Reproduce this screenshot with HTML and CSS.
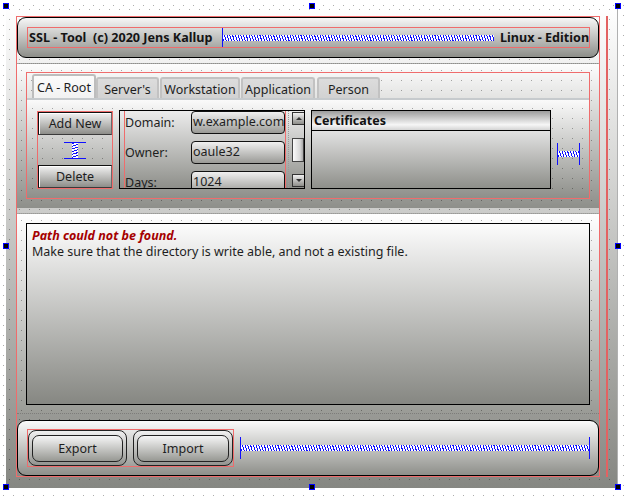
FILE: index.html
```html
<!DOCTYPE html>
<html>
<head>
<meta charset="utf-8">
<title>SSL - Tool</title>
<link rel="stylesheet" href="styles.css">
</head>
<body>
<div class="form">
  <div class="col">
    <div class="hdr">
      <div class="hdr-in">
        <span class="title">SSL - Tool  (c) 2020 Jens Kallup</span>
        <div class="hspring"><div class="coil"></div></div>
        <span class="title ed">Linux - Edition</span>
      </div>
    </div>

    <div class="sec tabsec">
      <div class="tabw">
        <div class="tabbar">
          <div class="tab sel t1">CA - Root</div>
          <div class="tab t2">Server's</div>
          <div class="tab t3">Workstation</div>
          <div class="tab t4">Application</div>
          <div class="tab t5">Person</div>
        </div>
        <div class="pane">
          <div class="btns">
            <div class="btn">Add New</div>
            <div class="vspring"><div class="vcoil"></div></div>
            <div class="btn">Delete</div>
          </div>
          <div class="scroll">
            <div class="fields">
              <div class="flay">
                <div class="row"><span class="lbl">Domain:</span><span class="edit">w.example.com</span></div>
                <div class="row"><span class="lbl">Owner:</span><span class="edit">oaule32</span></div>
                <div class="row"><span class="lbl">Days:</span><span class="edit">1024</span></div>
              </div>
            </div>
            <div class="sbar">
              <div class="sbtn up"><span class="arr"></span></div>
              <div class="handle"></div>
              <div class="sbtn down"><span class="arr"></span></div>
            </div>
          </div>
          <div class="table">
            <div class="th">Certificates</div>
            <div class="tbody"></div>
          </div>
          <div class="hspring sspring"><div class="coil"></div></div>
        </div>
      </div>
    </div>

    <div class="sec msgsec">
      <div class="msg">
        <div class="err">Path could not be found.</div>
        <div>Make sure that the directory is write able, and not a existing file.</div>
      </div>
    </div>

    <div class="botsec">
      <div class="botframe">
        <div class="bbtns">
          <div class="obtn ob1"><div class="ibtn">Export</div></div>
          <div class="obtn ob2"><div class="ibtn">Import</div></div>
        </div>
        <div class="hspring bspring"><div class="coil"></div></div>
      </div>
    </div>
  </div>
  <div class="rline"></div>
</div>

<div class="hd h-tl"></div>
<div class="hd h-tm"></div>
<div class="hd h-tr"></div>
<div class="hd h-ml"></div>
<div class="hd h-mr"></div>
<div class="hd h-bl"></div>
<div class="hd h-bm"></div>
<div class="hd h-br"></div>
</body>
</html>
```

FILE: styles.css
```css
* { box-sizing: border-box; }
:root {
  --dots: conic-gradient(from 270deg at 1px 1px, rgba(0,0,0,.32) 90deg, transparent 0);
  --red: #ef6c6c;
  --blue: #1010ff;
}
html, body { margin: 0; }
body {
  width: 629px;
  height: 496px;
  overflow: hidden;
  position: relative;
  font-family: "Noto Sans", "DejaVu Sans", sans-serif;
  font-size: 12.5px;
  color: #1a1a1a;
  background: var(--dots) 3px 5px / 10px 10px, #fff;
}

/* form */
.form {
  margin: 6px 0 0 6px;
  width: 612px;
  height: 482px;
  padding: 10px 0 0 10px;
  display: flex;
  align-items: flex-start;
  background: var(--dots) 3px 3px / 10px 10px, linear-gradient(#ffffff, #868782);
  box-shadow: inset -1px 0 #b0b0b0;
}
.col {
  width: 584px;
  height: 461px;
  border: 1px solid var(--red);
  display: flex;
  flex-direction: column;
}
.rline {
  width: 2px;
  height: 461px;
  margin-left: 6px;
  background: #e36262;
}

/* header */
.hdr {
  height: 41px;
  border: 1px solid #000;
  border-radius: 9px;
  background: linear-gradient(#f6f6f6, #8d8e89);
  padding: 9px 8px 9px 9px;
}
.hdr-in {
  height: 21px;
  border: 1px solid var(--red);
  display: flex;
  align-items: center;
}
.title {
  font-weight: bold;
  font-size: 12.6px;
  white-space: pre;
  width: 194px;
  padding-left: 1px;
  overflow: hidden;
  color: #141414;
}
.title.ed { width: 95px; padding-left: 6px; }

/* springs */
.hspring {
  flex: 1;
  height: 100%;
  border-left: 1px solid var(--blue);
  display: flex;
  align-items: center;
}
.coil {
  flex: 1;
  height: 6px;
  background: repeating-linear-gradient(72deg, var(--blue) 0 1px, #fff 1px 2.6px);
}
.sspring {
  flex: none;
  width: 23px;
  height: 22px;
  align-self: center;
  border-right: 1px solid var(--blue);
  margin-left: 6px;
}
.bspring {
  flex: none;
  width: 350px;
  height: 22px;
  margin-left: 6px;
  border-right: 1px solid var(--blue);
}
.vspring {
  width: 22px;
  height: 17px;
  align-self: center;
  border-top: 1px solid var(--blue);
  border-bottom: 1px solid var(--blue);
  display: flex;
  justify-content: center;
}
.vcoil {
  width: 6px;
  background: repeating-linear-gradient(162deg, var(--blue) 0 1px, #fff 1px 2.6px);
}

/* sections */
.sec { border-top: 1px dotted #a8a8a8; }
.tabsec {
  margin-top: 5px;
  height: 145px;
  padding: 8px 9px 0 9px;
  background: var(--dots) 4px 6px / 10px 10px, linear-gradient(#fdfdfd, #8e8f8a);
}
.tabw {
  height: 127px;
  border: 1px solid var(--red);
  display: flex;
  flex-direction: column;
}
.tabbar {
  height: 25px;
  padding-left: 5px;
  display: flex;
  align-items: flex-end;
}
.tab {
  height: 21px;
  border: 2px solid #c2c2c2;
  border-bottom: none;
  border-radius: 3px 3px 0 0;
  background: linear-gradient(#dcdcdc, #d2d2d2);
  display: flex;
  align-items: center;
  justify-content: center;
  color: #1e1e1e;
  padding-top: 1px;
}
.tab.sel {
  height: 24px;
  background: linear-gradient(#fbfbfb, #f2f2f2);
  border-color: #bdbdbd;
  padding-top: 0;
}
.t1 { width: 64px; }
.t2 { width: 63px; }
.t3 { width: 80px; margin-left: 1px; }
.t4 { width: 74px; margin-left: 1px; }
.t5 { width: 63px; margin-left: 2px; }

.pane {
  flex: 1;
  border-top: 2px solid #c6cacd;
  padding: 10px 0 0 10px;
  display: flex;
  align-items: flex-start;
  background: var(--dots) 5px 8px / 10px 10px, linear-gradient(#fafafa, #8e8f8a);
}

/* left buttons */
.btns {
  width: 76px;
  height: 78px;
  margin-top: 1px;
  border: 1px solid var(--red);
  display: flex;
  flex-direction: column;
  justify-content: space-between;
}
.btn {
  height: 23px;
  border: 1px solid;
  border-color: #111 #6a6a6a #3a3a3a #111;
  box-shadow: inset 1px 1px #fff;
  background: linear-gradient(#f2f2f2, #8d8d89);
  display: flex;
  align-items: center;
  justify-content: center;
  color: #1e1e1e;
}

/* scroll area */
.scroll {
  width: 186px;
  height: 79px;
  margin-left: 6px;
  border: 1px solid #000;
  display: flex;
  background: linear-gradient(#ececec, #8e8f8a);
  overflow: hidden;
}
.fields {
  width: 168px;
  padding-left: 4px;
  padding-right: 2px;
}
.flay {
  height: 100%;
  border-left: 1px solid var(--red);
  border-right: 1px solid var(--red);
  display: flex;
  flex-direction: column;
  gap: 7px;
}
.row {
  display: flex;
  align-items: center;
  height: 23px;
  flex: none;
}
.lbl { width: 66px; color: #1e1e1e; }
.edit {
  width: 94px;
  height: 23px;
  border: 1px solid #111;
  border-radius: 4px;
  background: linear-gradient(#f0f0f0, #9a9a96);
  padding-left: 1px;
  line-height: 20px;
  white-space: nowrap;
  overflow: hidden;
  color: #1e1e1e;
}
.sbar {
  width: 16px;
  padding: 1px 0 0 3px;
  display: flex;
  flex-direction: column;
  border-left: 1px dotted #9a9a9a;
}
.sbtn {
  width: 13px;
  height: 13px;
  border: 1px solid #333;
  background: linear-gradient(#f0f0f0, #8e8e8a);
  display: flex;
  align-items: center;
  justify-content: center;
}
.sbtn.down { margin-top: 12px; }
.arr {
  width: 0; height: 0;
  border-left: 3px solid transparent;
  border-right: 3px solid transparent;
}
.up .arr { border-bottom: 3px solid #333; }
.down .arr { border-top: 3px solid #333; }
.handle {
  width: 12px;
  height: 24px;
  margin-top: 13px;
  border: 1px solid #444;
  background: linear-gradient(90deg, #fafafa, #d8d8d8 70%, #a8a8a8);
}

/* table */
.table {
  width: 240px;
  height: 79px;
  margin-left: 6px;
  border: 1px solid #000;
  display: flex;
  flex-direction: column;
}
.th {
  height: 20px;
  border-bottom: 1px solid #000;
  padding-left: 2px;
  font-weight: bold;
  line-height: 20px;
  background: linear-gradient(#9c9c9c, #f6f6f6 72%, #d4d4d4);
  color: #111;
}
.tbody {
  flex: 1;
  background: linear-gradient(#e2e2e2, #8e8f8a);
}

/* message */
.msgsec {
  margin-top: 5px;
  height: 200px;
  padding: 9px;
  background: var(--dots) 4px 6px / 10px 10px, linear-gradient(#ffffff, #9a9b96);
}
.msg {
  height: 182px;
  border: 1px solid #000;
  padding: 4px 5px;
  line-height: 16px;
  background: linear-gradient(#fcfcfc, #868782);
  color: #1e1e1e;
}
.err {
  color: #a50000;
  font-weight: bold;
  font-style: italic;
}

/* bottom */
.botsec {
  height: 63px;
  border-top: 1px dotted #7d7d7a;
  padding: 6px 0 0 0;
}
.botframe {
  height: 56px;
  border: 1px solid #000;
  border-radius: 9px;
  background: linear-gradient(#fafafa, #8e8f8a);
  padding: 0 8px 0 9px;
  display: flex;
  align-items: center;
}
.bbtns {
  width: 207px;
  height: 38px;
  border: 1px solid var(--red);
  display: flex;
  gap: 6px;
}
.obtn {
  height: 36px;
  border: 1px solid #222;
  border-radius: 8px;
  padding: 4px 3px 3px 3px;
  background: linear-gradient(#f0f0f0, #939490);
}
.ob1 { width: 99px; }
.ob2 { width: 100px; }
.ibtn {
  height: 27px;
  border: 1px solid #222;
  border-radius: 7px;
  background: linear-gradient(#f6f6f6, #979893);
  display: flex;
  align-items: center;
  justify-content: center;
  color: #1e1e1e;
}

/* selection handles */
.hd {
  position: absolute;
  width: 6px;
  height: 6px;
  border: 1px solid #0000ff;
  background: #000;
}
.h-tl { left: 3px; top: 3px; }
.h-tm { left: 309px; top: 3px; }
.h-tr { left: 615px; top: 3px; }
.h-ml { left: 3px; top: 243px; }
.h-mr { left: 615px; top: 243px; }
.h-bl { left: 3px; top: 484px; }
.h-bm { left: 309px; top: 484px; }
.h-br { left: 615px; top: 484px; }
```
